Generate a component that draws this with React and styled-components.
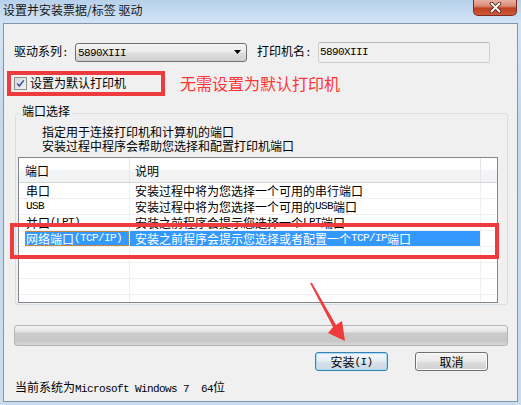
import React from "react";
import styled, { createGlobalStyle } from "styled-components";

const GlobalStyle = createGlobalStyle`
  html, body { margin: 0; padding: 0; }
  body {
    font-family: "Noto Sans CJK SC", "Liberation Sans", sans-serif;
    font-size: 12px;
    color: #000;
  }
`;

const Window = styled.div`
  width: 521px;
  height: 405px;
  box-sizing: border-box;
  display: flex;
  flex-direction: column;
  padding: 0 3px 3px;
  background: linear-gradient(180deg, #b7d1eb 0%, #d3e4f5 6%, #c4d9ee 30%, #c9dcf0 100%);
`;

const TitleBar = styled.div`
  height: 23px;
  display: flex;
  align-items: flex-start;
  justify-content: space-between;
`;

const Title = styled.div`
  font-size: 12px;
  line-height: 14px;
  padding-top: 3px;
  color: #161616;
`;

const CloseButton = styled.div`
  width: 44px;
  height: 16px;
  margin-right: 1px;
  box-sizing: border-box;
  border: 1px solid #7b2b20;
  border-top: none;
  border-radius: 0 0 5px 5px;
  background: linear-gradient(180deg, #eab0a3 0%, #dc8a76 40%, #c0401f 55%, #cf5a3c 100%);
  display: flex;
  align-items: center;
  justify-content: center;
`;

const Client = styled.div`
  flex: 1;
  position: relative;
  background: #f0f0f0;
  border: 1px solid #8596a8;
  padding-left: 10px;
  display: flex;
  flex-direction: column;
`;

const Latin = styled.span`
  font-family: "Liberation Mono", monospace;
  font-size: 11px;
  letter-spacing: -0.6px;
  white-space: pre;
`;

const mix = (text) =>
  text.split(/([\x20-\x7e]+)/).map((part, i) =>
    /^[\x20-\x7e]+$/.test(part) ? <Latin key={i}>{part}</Latin> : part
  );

const FieldRow = styled.div`
  display: flex;
  align-items: center;
  height: 20px;
  margin-top: 18px;
`;

const FieldLabel = styled.span`
  width: 61px;
  line-height: 14px;
  margin-left: ${(p) => p.$offset || 0}px;
`;

const Combo = styled.div`
  width: 172px;
  height: 19px;
  box-sizing: border-box;
  border: 1px solid #707070;
  border-radius: 3px;
  background: linear-gradient(180deg, #f3f3f3 0%, #ececec 45%, #dddddd 55%, #d0d0d0 100%);
  display: flex;
  align-items: center;
  justify-content: space-between;
  padding: 0 5px 0 2px;
  line-height: 14px;
`;

const TextBox = styled.div`
  width: 172px;
  height: 21px;
  box-sizing: border-box;
  border: 1px solid #cfcfcf;
  border-top-color: #b9b9b9;
  border-radius: 2px;
  background: #f1f1f1;
  padding-left: 1px;
  display: flex;
  align-items: center;
  line-height: 14px;
`;

const CheckRow = styled.div`
  display: flex;
  align-items: center;
  height: 16px;
  margin-top: 13px;
`;

const CheckBox = styled.span`
  width: 13px;
  height: 13px;
  box-sizing: border-box;
  border: 1px solid #8e8f8f;
  background: linear-gradient(135deg, #d6d6d6 0%, #f4f4f4 100%);
  display: flex;
  align-items: center;
  justify-content: center;
`;

const CheckLabel = styled.span`
  margin-left: 3px;
  line-height: 14px;
`;

const Note = styled.span`
  margin-left: 54px;
  font-size: 16px;
  line-height: 18px;
  color: #ff3535;
`;

const GroupBox = styled.fieldset`
  margin: 14px 0 0 1px;
  width: 493px;
  box-sizing: border-box;
  padding: 4px 9px 1px 2px;
  border: 1px solid #d5dfe5;
  border-radius: 3px;
`;

const GroupTitle = styled.legend`
  margin-left: 2px;
  padding: 0 2px 4px;
  line-height: 12px;
  font-size: 12px;
`;

const Hint = styled.div`
  margin-left: 24px;
  line-height: 14px;
`;

const List = styled.div`
  margin-top: 4px;
  height: 146px;
  box-sizing: border-box;
  border: 1px solid #828790;
  background: #fff;
  overflow: hidden;
`;

const HeaderRow = styled.div`
  display: flex;
  height: 25px;
  box-sizing: border-box;
  border-bottom: 1px solid #d5d5d5;
  background: linear-gradient(180deg, #ffffff 0%, #ffffff 45%, #f3f4f6 55%, #f1f2f4 100%);
`;

const Row = styled.div`
  display: flex;
  height: 16px;
  box-sizing: border-box;
  border-bottom: 1px solid #f0f0f0;
  line-height: 15px;
  color: ${(p) => (p.$selected ? "#fff" : "#000")};
`;

const Cell = styled.div`
  width: ${(p) => p.$w}px;
  flex: ${(p) => (p.$w ? "none" : "1")};
  box-sizing: border-box;
  border-right: ${(p) => (p.$w ? `1px solid ${p.$line}` : "none")};
  padding-left: ${(p) => p.$pad || 0}px;
  display: flex;
  align-items: center;
  white-space: nowrap;
  overflow: hidden;
  background: ${(p) => (p.$fill ? "#3399ff" : "transparent")};
`;

const CellText = styled.span`
  flex: 1;
  padding-left: 1px;
  align-self: stretch;
  display: flex;
  align-items: center;
  box-sizing: border-box;
  background: ${(p) => (p.$selected ? "#3399ff" : "transparent")};
  outline: ${(p) => (p.$selected ? "1px dotted #c98a4a" : "none")};
  outline-offset: -1px;
`;

const Progress = styled.div`
  margin-top: 20px;
  width: 494px;
  height: 21px;
  box-sizing: border-box;
  border: 1px solid #b4b4b4;
  border-radius: 3px;
  background: linear-gradient(180deg, #f4f4f4 0%, #e4e4e4 30%, #cbcbcb 38%, #c8c8c8 80%, #d8d8d8 100%);
`;

const ButtonRow = styled.div`
  display: flex;
  justify-content: flex-end;
  gap: 27px;
  margin-top: 6px;
  padding-right: 29px;
`;

const Button = styled.div`
  width: 73px;
  height: 19px;
  box-sizing: border-box;
  border: 1px solid ${(p) => (p.$primary ? "#3c7fb1" : "#707070")};
  border-radius: 3px;
  box-shadow: ${(p) => (p.$primary ? "inset 0 0 0 1px #a6dcf8" : "inset 0 0 0 1px #fbfbfb")};
  background: ${(p) =>
    p.$primary
      ? "linear-gradient(180deg, #f3f7fa 0%, #e7eef4 45%, #d8e2ea 55%, #cbd6df 100%)"
      : "linear-gradient(180deg, #f2f2f2 0%, #ebebeb 45%, #dddddd 55%, #cfcfcf 100%)"};
  display: flex;
  align-items: center;
  justify-content: center;
  line-height: 14px;
`;

const Status = styled.div`
  margin-top: 9px;
  margin-left: 1px;
  line-height: 14px;
`;

const Mark = styled.div`
  position: absolute;
  box-sizing: border-box;
  border: 4px solid #ee3b3e;
  left: ${(p) => p.$x}px;
  top: ${(p) => p.$y}px;
  width: ${(p) => p.$w}px;
  height: ${(p) => p.$h}px;
  pointer-events: none;
`;

const Arrow = styled.svg`
  position: absolute;
  left: 296px;
  top: 256px;
`;

const ports = [
  ["串口", "安装过程中将为您选择一个可用的串行端口"],
  ["USB", "安装过程中将为您选择一个可用的USB端口"],
  ["并口(LPT)", "安装之前程序会提示您选择一个LPT端口"],
  ["网络端口(TCP/IP)", "安装之前程序会提示您选择或者配置一个TCP/IP端口"],
  ["", ""],
  ["", ""],
  ["", ""],
  ["", ""],
];

const selected = 3;

export default function App() {
  return (
    <>
      <GlobalStyle />
      <Window>
        <TitleBar>
          <Title>设置并安装票据/标签 驱动</Title>
          <CloseButton>
            <svg width="13" height="11" viewBox="0 0 13 11">
              <path d="M2.5 1.5 L10.5 9.5 M10.5 1.5 L2.5 9.5" stroke="#4a1a12" strokeWidth="3.6" strokeLinecap="round" />
              <path d="M2.5 1.5 L10.5 9.5 M10.5 1.5 L2.5 9.5" stroke="#fff" strokeWidth="2" strokeLinecap="round" />
            </svg>
          </CloseButton>
        </TitleBar>
        <Client>
          <FieldRow>
            <FieldLabel>{mix("驱动系列:")}</FieldLabel>
            <Combo>
              <span>{mix("5890XIII")}</span>
              <svg width="7" height="4" viewBox="0 0 7 4">
                <polygon points="0,0 7,0 3.5,4" fill="#000" />
              </svg>
            </Combo>
            <FieldLabel $offset={10}>{mix("打印机名:")}</FieldLabel>
            <TextBox>{mix("5890XIII")}</TextBox>
          </FieldRow>

          <CheckRow>
            <CheckBox>
              <svg width="11" height="11" viewBox="0 0 11 11">
                <path d="M2.2 5.6 L4.4 8 L8.8 2.4" fill="none" stroke="#34529a" strokeWidth="1.5" />
              </svg>
            </CheckBox>
            <CheckLabel>设置为默认打印机</CheckLabel>
            <Note>无需设置为默认打印机</Note>
          </CheckRow>

          <GroupBox>
            <GroupTitle>端口选择</GroupTitle>
            <Hint>指定用于连接打印机和计算机的端口</Hint>
            <Hint>安装过程中程序会帮助您选择和配置打印机端口</Hint>
            <List>
              <HeaderRow>
                <Cell $w={111} $pad={6} $line="#e3e5e8">端口</Cell>
                <Cell $w={351} $pad={5} $line="#e3e5e8">说明</Cell>
                <Cell />
              </HeaderRow>
              {ports.map(([port, desc], i) => (
                <Row key={i} $selected={i === selected}>
                  <Cell $w={111} $pad={6} $line="#f0f0f0">
                    <CellText $selected={i === selected}>{mix(port)}</CellText>
                  </Cell>
                  <Cell $w={351} $pad={5} $line="#f0f0f0" $fill={i === selected}>
                    {mix(desc)}
                  </Cell>
                  <Cell />
                </Row>
              ))}
            </List>
          </GroupBox>

          <Progress />

          <ButtonRow>
            <Button $primary>{mix("安装(I)")}</Button>
            <Button>取消</Button>
          </ButtonRow>

          <Status>{mix("当前系统为Microsoft Windows 7  64位")}</Status>

          <Mark $x={3} $y={47} $w={158} $h={25} />
          <Mark $x={6} $y={199} $w={489} $h={36} />
          <Arrow width="50" height="66" viewBox="0 0 50 66">
            <polygon
              points="10,3 12,3 36,45 42,41 45,61 28,53 33,47"
              fill="#ef3b3b"
            />
          </Arrow>
        </Client>
      </Window>
    </>
  );
}
